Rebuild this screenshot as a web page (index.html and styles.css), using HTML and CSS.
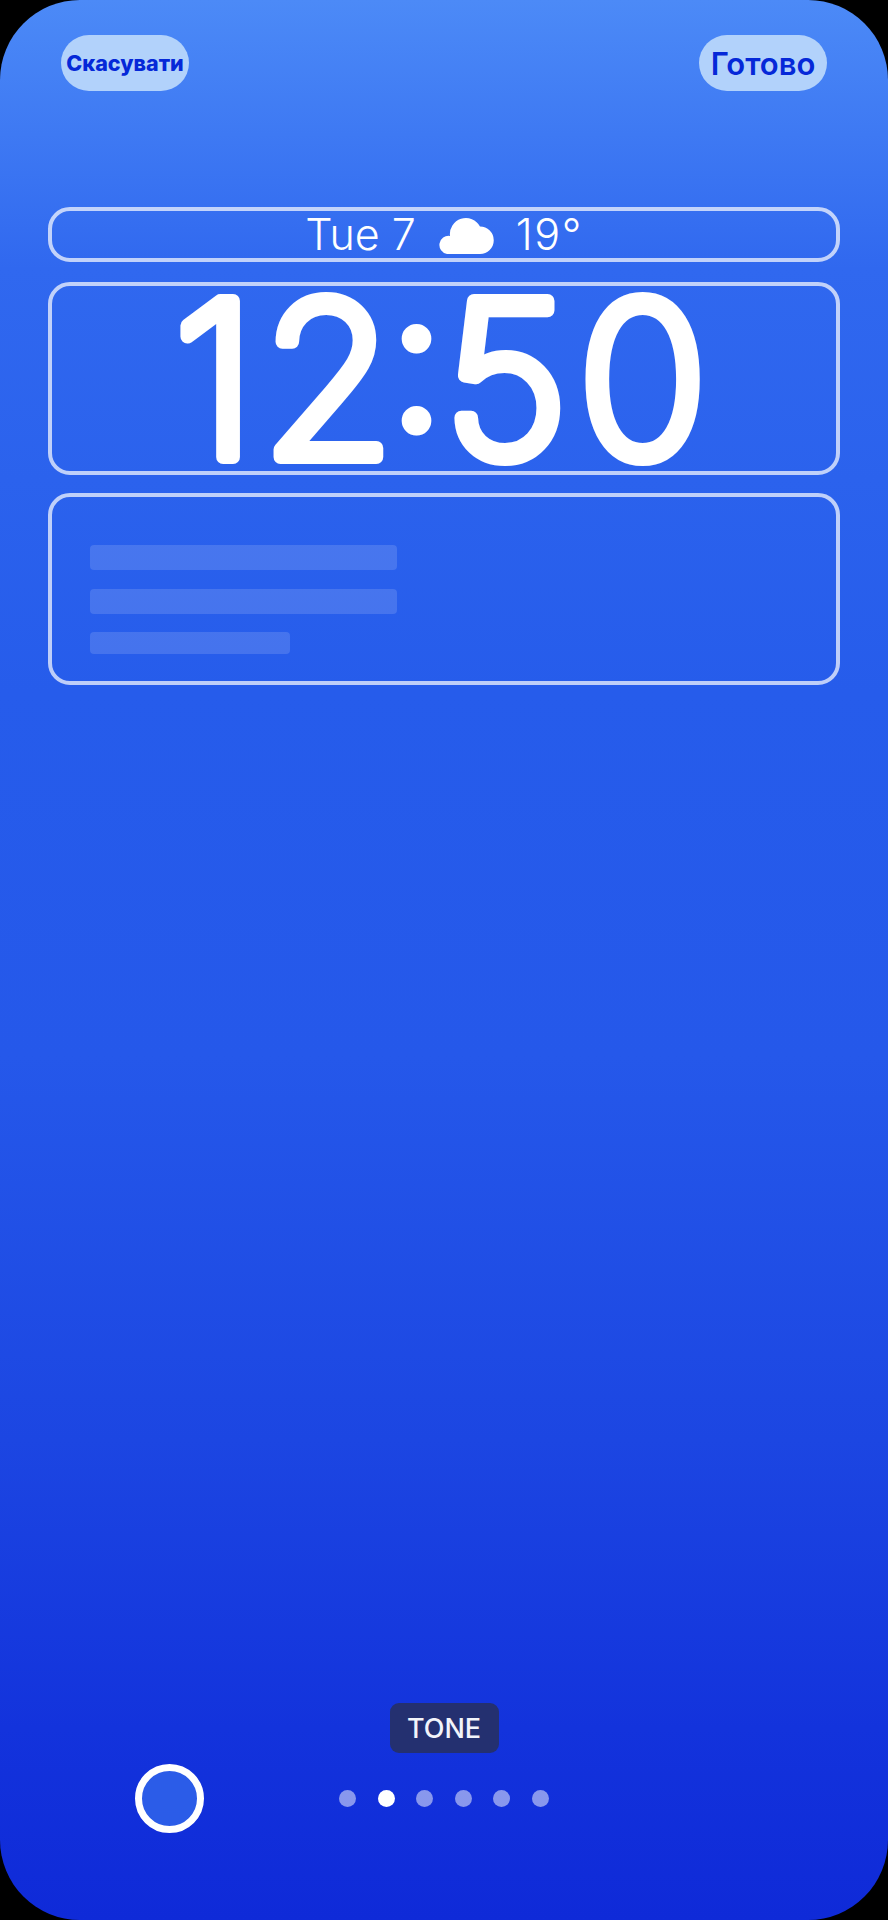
FILE: index.html
```html
<!DOCTYPE html>
<html lang="uk">
<head>
<meta charset="utf-8">
<title>Lock Screen</title>
<link rel="stylesheet" href="styles.css">
</head>
<body>
<main class="screen">
  <header class="topbar">
    <button class="pill pill-cancel">Скасувати</button>
    <button class="pill pill-done">Готово</button>
  </header>
  <section class="zones">
    <div class="zone zone-date">
      <span>Tue 7</span>
      <svg class="cloud" viewBox="0 0 57 38" aria-hidden="true"><path d="M10 38A9.100 9.100 0 0 1 13 20A16 16 0 0 1 43 10.500A13.750 13.750 0 0 1 43 38Z"/></svg>
      <span class="temp">19°</span>
    </div>
    <div class="zone zone-time">
      <svg class="clock" viewBox="0 0 784 185">
        <text class="clock-text" y="171"><tspan x="122 210">12</tspan><tspan class="clock-colon" x="337" y="144">:</tspan><tspan x="392 526" y="171">50</tspan></text>
      </svg>
    </div>
    <div class="zone zone-widgets">
      <div class="bar bar-long"></div>
      <div class="bar bar-long"></div>
      <div class="bar bar-short"></div>
    </div>
  </section>
  <footer class="bottom">
    <div class="tag">TONE</div>
    <div class="controls">
      <div class="swatch-cell"><div class="swatch"></div></div>
      <div class="dots">
        <span class="dot"></span>
        <span class="dot dot-on"></span>
        <span class="dot"></span>
        <span class="dot"></span>
        <span class="dot"></span>
        <span class="dot"></span>
      </div>
    </div>
  </footer>
</main>
</body>
</html>
```
FILE: styles.css
```css
* { box-sizing: border-box; }
html, body { margin: 0; padding: 0; background: #000; }
.screen {
  width: 888px;
  height: 1920px;
  display: flex;
  flex-direction: column;
  border-radius: 80px;
  overflow: hidden;
  background: linear-gradient(180deg, #4c8af7 0%, #3068ef 14%, #265ceb 36%, #2558ea 55%, #1c46e2 75%, #1333dc 90%, #0f2ad8 100%);
  font-family: Inter, "Liberation Sans", sans-serif;
  color: #fff;
}
.topbar {
  display: flex;
  justify-content: space-between;
  padding: 35px 61px 0;
}
.pill {
  width: 128px;
  height: 56px;
  padding: 0;
  border: 0;
  border-radius: 28px;
  background: #b2d2fb;
  color: #0528d8;
  font-family: Inter, sans-serif;
  font-weight: 800;
  text-align: center;
}
.pill-cancel { font-size: 21.5px; }
.pill-done { font-size: 31px; font-weight: 600; }
.zones {
  display: flex;
  flex-direction: column;
  margin: 116px 48px 0;
}
.zone {
  border: 4px solid rgba(255, 255, 255, 0.7);
  border-radius: 22px;
}
.zone-date {
  height: 55px;
  display: flex;
  align-items: center;
  justify-content: center;
  font-size: 43px;
  font-weight: 300;
  line-height: 1;
}
.temp { letter-spacing: 1.5px; }
.cloud {
  width: 57px;
  height: 38px;
  margin: 0 21.5px;
  fill: #fff;
}
.zone-time { height: 193px; margin-top: 20px; }
.clock { display: block; width: 100%; height: 185px; overflow: visible; }
.clock-text {
  font-family: Inter, sans-serif;
  font-size: 214px;
  font-weight: 250;
  fill: #fff;
  stroke: #fff;
  stroke-width: 14px;
  stroke-linejoin: round;
  stroke-linecap: round;
}
.clock-colon { font-size: 195px; font-weight: 300; stroke-width: 9px; }
.zone-widgets {
  height: 192px;
  margin-top: 18px;
  padding: 48px 0 0 38px;
  display: flex;
  flex-direction: column;
  gap: 18.5px;
}
.bar {
  height: 25px;
  border-radius: 4px;
  background: rgba(255, 255, 255, 0.14);
}
.bar-long { width: 307px; }
.bar-short { width: 200px; height: 22px; }
.bottom {
  margin-top: auto;
  padding-bottom: 87px;
  display: flex;
  flex-direction: column;
  align-items: center;
}
.tag {
  width: 109px;
  height: 50px;
  display: flex;
  align-items: center;
  justify-content: center;
  border-radius: 9px;
  background: #243070;
  color: #f2f4fa;
  font-size: 27px;
  font-weight: 500;
}
.controls {
  width: 100%;
  margin-top: 11px;
  display: grid;
  grid-template-columns: 1fr auto 1fr;
  align-items: center;
}
.swatch-cell { padding-left: 135px; }
.swatch {
  width: 69px;
  height: 69px;
  border-radius: 50%;
  border: 7px solid #fff;
  background: #2b5ce8;
}
.dots { display: flex; gap: 21.6px; }
.dot {
  width: 17px;
  height: 17px;
  border-radius: 50%;
  background: rgba(255, 255, 255, 0.5);
}
.dot-on { background: #fff; }
```
